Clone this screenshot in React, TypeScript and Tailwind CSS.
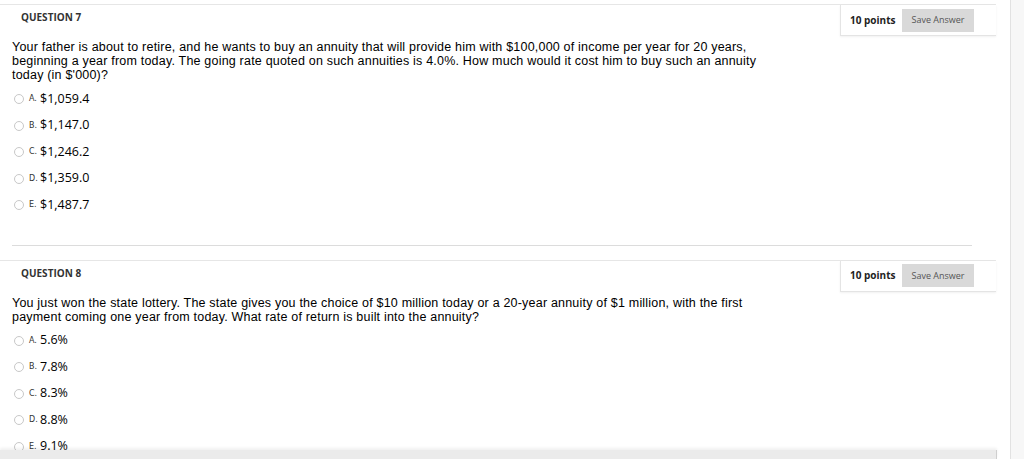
import React from "react";

const q7Options = [
  { key: "A.", value: "$1,059.4" },
  { key: "B.", value: "$1,147.0" },
  { key: "C.", value: "$1,246.2" },
  { key: "D.", value: "$1,359.0" },
  { key: "E.", value: "$1,487.7" },
];

const q8Options = [
  { key: "A.", value: "5.6%" },
  { key: "B.", value: "7.8%" },
  { key: "C.", value: "8.3%" },
  { key: "D.", value: "8.8%" },
  { key: "E.", value: "9.1%" },
];

const PointsBox = () => (
  <div className="flex items-center w-[156px] h-[31px] pl-[9px] border-l border-b border-[#e4e4e4] shadow-[0_1px_2px_rgba(0,0,0,0.06)] font-['Open_Sans',sans-serif]">
    <span className="text-[10px] font-bold text-[#222] w-[52px]">10 points</span>
    <button className="w-[72px] h-[23px] bg-[#d9d9d9] text-[9px] text-[#555]">
      Save Answer
    </button>
  </div>
);

const Option = ({ k, value }: { k: string; value: string }) => (
  <label className="flex items-center h-[26.5px] pl-[14px]">
    <span className="w-[10px] h-[10px] rounded-full border border-[#c8c8c8] bg-white" />
    <span className="ml-[5px] text-[8px] text-[#333] font-['DejaVu_Sans',sans-serif] w-[11px]">
      {k}
    </span>
    <span className="text-[12.5px] text-black font-['Open_Sans',sans-serif]">{value}</span>
  </label>
);

const Question = ({
  num,
  lines,
  options,
}: {
  num: number;
  lines: string[];
  options: { key: string; value: string }[];
}) => (
  <section className="w-[996px] border-t border-[#e6e6e6]">
    <div className="flex justify-between">
      <h3 className="pl-[21px] pt-[5px] text-[10px] font-bold text-[#333] font-['Open_Sans',sans-serif]">
        QUESTION {num}
      </h3>
      <PointsBox />
    </div>
    <p className="pl-[12px] pt-[4px] text-[12.5px] leading-[14px] tracking-[0.2px] text-black whitespace-nowrap font-['Comic_Sans_MS','Liberation_Sans',sans-serif]">
      {lines.map((l, i) => (
        <React.Fragment key={i}>
          {l}
          {i < lines.length - 1 && <br />}
        </React.Fragment>
      ))}
    </p>
    <div className="mt-[4px]">
      {options.map((o) => (
        <Option key={o.key} k={o.key} value={o.value} />
      ))}
    </div>
  </section>
);

export default function App() {
  return (
    <div className="flex w-[1024px] h-[459px] overflow-hidden bg-white">
      <main className="relative w-[1010px] pt-[4px]">
        <Question
          num={7}
          lines={[
            "Your father is about to retire, and he wants to buy an annuity that will provide him with $100,000 of income per year for 20 years,",
            "beginning a year from today. The going rate quoted on such annuities is 4.0%. How much would it cost him to buy such an annuity",
            "today (in $'000)?",
          ]}
          options={q7Options}
        />
        <div className="ml-[12px] mt-[26px] mb-[14px] w-[960px] border-t border-[#dcdcdc]" />
        <Question
          num={8}
          lines={[
            "You just won the state lottery. The state gives you the choice of $10 million today or a 20-year annuity of $1 million, with the first",
            "payment coming one year from today. What rate of return is built into the annuity?",
          ]}
          options={q8Options}
        />
        <div className="absolute left-0 top-[450px] w-[997px] h-[9px] bg-[#ebebeb] border-r border-[#cfcfcf] shadow-[0_-2px_3px_rgba(0,0,0,0.06)]" />
      </main>
      <aside className="w-[14px] h-full bg-[#f7f7f7] border-l border-[#e2e2e2]" />
    </div>
  );
}
